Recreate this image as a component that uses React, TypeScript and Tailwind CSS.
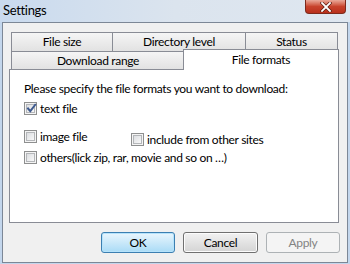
import React from "react";

function Checkbox({ checked = false }: { checked?: boolean }) {
  return (
    <div className="relative w-[13px] h-[13px] shrink-0 border border-[#8e8f8f] bg-[#f4f4f4] p-[1px]">
      <div className="w-full h-full border border-[#b4b6b9] bg-gradient-to-br from-[#dcdee1] to-[#f8f8f8]" />
      {checked && (
        <svg className="absolute left-[1px] top-[0px]" width="11" height="11" viewBox="0 0 11 11">
          <path d="M2 5.5 L4.3 8.2 L9.2 1.8" fill="none" stroke="#3f5b8f" strokeWidth="2" strokeLinecap="square" />
        </svg>
      )}
    </div>
  );
}

function Tab({ label, className }: { label: string; className: string }) {
  return (
    <div
      className={
        "flex items-center justify-center border-t border-l border-r border-[#898c95] bg-gradient-to-b from-[#f5f5f5] to-[#e2e2e2] text-[12px] text-black " +
        className
      }
    >
      {label}
    </div>
  );
}

export default function App() {
  return (
    <div className="w-[350px] h-[264px] overflow-hidden bg-[#c3d6ec] font-['Lato',sans-serif] tracking-[-0.32px] flex flex-col">
      {/* Title bar */}
      <div className="relative h-[22px] shrink-0 bg-gradient-to-r from-[#c9daee] via-[#dbe4ee] to-[#dfe7f0]">
        <div className="pl-[3px] pt-[2px] text-[13px] leading-[16px] text-black">Settings</div>
        <div className="absolute left-[305px] top-0 w-[41px] h-[14px] rounded-b-[4px] border border-t-0 border-[#7d2a1c] bg-gradient-to-b from-[#e9a99a] via-[#c8432c] to-[#b8301c] flex items-center justify-center">
          <svg width="12" height="10" viewBox="0 0 12 10">
            <path d="M2 1 L10 9 M10 1 L2 9" stroke="#5a1b10" strokeWidth="3.2" strokeLinecap="square" />
            <path d="M2 1 L10 9 M10 1 L2 9" stroke="#ffffff" strokeWidth="1.8" strokeLinecap="square" />
          </svg>
        </div>
      </div>

      {/* Client area */}
      <div className="ml-[2px] w-[346px] h-[241px] border border-[#7c8796] bg-[#f0f0f0] flex flex-col">
        {/* Tab control */}
        <div className="mt-[9px] ml-[6px] w-[330px] flex flex-col">
          <div className="flex h-[19px] pl-[2px]">
            <Tab label="File size" className="w-[102px] h-[19px]" />
            <Tab label="Directory level" className="w-[134px] h-[19px] -ml-px" />
            <Tab label="Status" className="w-[93px] h-[19px] -ml-px" />
          </div>
          <div className="flex h-[18px] pl-[2px] items-start">
            <Tab label="Download range" className="w-[174px] h-[18px]" />
            <div className="relative z-10 -ml-[2px] -mt-[2px] w-[156px] h-[21px] border-t border-l border-r border-[#898c95] bg-white flex items-center justify-center text-[12px] text-black pb-[1px]">
              File formats
            </div>
          </div>
          <div className="h-[154px] border border-[#898c95] bg-white pl-[14px] pt-[11px] text-[12px] text-black leading-[15px]">
            <div>Please specify the file formats you want to download:</div>
            <div className="mt-[6px] flex items-center gap-[3px] h-[13px]">
              <Checkbox checked />
              <span>text file</span>
            </div>
            <div className="mt-[14px] flex items-start h-[16px]">
              <div className="flex items-center gap-[3px] w-[107px]">
                <Checkbox />
                <span>image file</span>
              </div>
              <div className="mt-[3px] flex items-center gap-[3px]">
                <Checkbox />
                <span>include from other sites</span>
              </div>
            </div>
            <div className="mt-[6px] flex items-center gap-[3px] h-[13px]">
              <Checkbox />
              <span>others(lick zip, rar, movie and so on …)</span>
            </div>
          </div>
        </div>

        {/* Buttons */}
        <div className="mt-[9px] flex justify-end pr-[7px] gap-[8px] text-[12px]">
          <div className="w-[74px] h-[21px] rounded-[3px] border border-[#3c7fb1] bg-gradient-to-b from-[#eaf6fd] to-[#a9dbf6] shadow-[inset_0_0_0_1px_#b6e3fb] flex items-center justify-center text-black">
            OK
          </div>
          <div className="w-[75px] h-[21px] rounded-[3px] border border-[#707070] bg-gradient-to-b from-[#f2f2f2] to-[#d4d4d4] shadow-[inset_0_0_0_1px_#fcfcfc] flex items-center justify-center text-black">
            Cancel
          </div>
          <div className="w-[74px] h-[21px] rounded-[3px] border border-[#adb2b5] bg-[#f4f4f4] flex items-center justify-center text-[#838383]">
            Apply
          </div>
        </div>
      </div>
    </div>
  );
}
